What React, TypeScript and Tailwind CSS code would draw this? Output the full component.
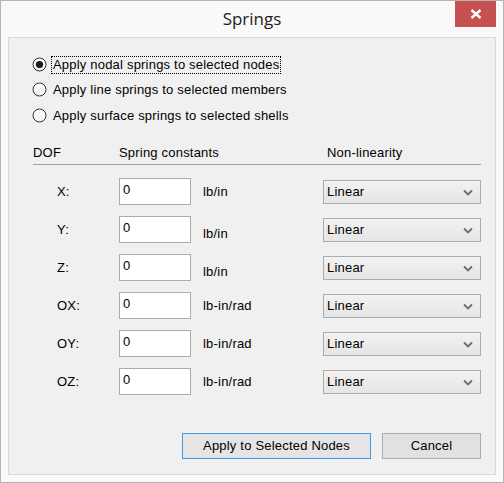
import React from "react";

const rows = [
  { dof: "X:", unit: "lb/in", shift: false },
  { dof: "Y:", unit: "lb/in", shift: true },
  { dof: "Z:", unit: "lb/in", shift: true },
  { dof: "OX:", unit: "lb-in/rad", shift: false },
  { dof: "OY:", unit: "lb-in/rad", shift: false },
  { dof: "OZ:", unit: "lb-in/rad", shift: false },
];

function Radio({ checked }: { checked?: boolean }) {
  return (
    <svg width="15" height="15" viewBox="0 0 15 15" className="shrink-0">
      <defs>
        <linearGradient id="rg" x1="0" y1="0" x2="0" y2="1">
          <stop offset="0" stopColor="#ffffff" />
          <stop offset="1" stopColor="#f0f0f0" />
        </linearGradient>
      </defs>
      <circle cx="7.5" cy="7.5" r="6.5" fill="url(#rg)" stroke="#333333" strokeWidth="1" />
      {checked && <circle cx="7.5" cy="7.5" r="3.6" fill="#1a1a1a" />}
    </svg>
  );
}

function Chevron() {
  return (
    <svg width="10" height="7" viewBox="0 0 10 7">
      <path d="M1 1.5 L5 5.5 L9 1.5" fill="none" stroke="#6d6d6d" strokeWidth="1.8" />
    </svg>
  );
}

export default function App() {
  const font = { fontFamily: '"Liberation Sans", Arial, sans-serif' };
  const radios = [
    { t: "Apply nodal springs to selected nodes", h: "h-[25px]" },
    { t: "Apply line springs to selected members", h: "h-[26px]" },
    { t: "Apply surface springs to selected shells", h: "h-[28px]" },
  ];
  return (
    <div className="w-[504px] h-[483px] border border-[#b4b4b4] bg-[#f9f9f9] flex flex-col text-[13px] text-black tracking-[0.2px]" style={font}>
      <div className="relative h-[36px] shrink-0 flex items-center justify-center">
        <span className="text-[17px] text-[#222] leading-none mt-[-1px] tracking-normal" style={{ fontFamily: '"Open Sans", "Noto Sans", sans-serif' }}>
          Springs
        </span>
        <div className="absolute right-[7px] top-0 w-[41px] h-[26px] bg-[#c75050] flex items-center justify-center">
          <svg width="12" height="10" viewBox="0 0 12 10">
            <path d="M1.5 1 L10.5 9 M10.5 1 L1.5 9" stroke="#ffffff" strokeWidth="2.4" />
          </svg>
        </div>
      </div>
      <div className="mx-[7px] h-[438px] border border-[#d9d9d9] bg-[#f0f0f0] flex flex-col">
        <div className="mt-[14px] pl-[23px] flex flex-col">
          {radios.map((r, i) => (
            <div key={r.t} className={r.h + " flex items-start"}>
              <div className="h-[25px] flex items-center">
                <Radio checked={i === 0} />
                <span className={"ml-[4px] leading-[16px] px-[1px] " + (i === 0 ? "border border-dotted border-black" : "border border-transparent")}>
                  {r.t}
                </span>
              </div>
            </div>
          ))}
        </div>
        <div className="mt-[12px] ml-[24px] w-[448px] h-[22px] border-b border-[#a0a0a0] flex items-center pb-[1px]">
          <span className="w-[86px]">DOF</span>
          <span className="w-[208px]">Spring constants</span>
          <span>Non-linearity</span>
        </div>
        <div className="mt-[13px] flex flex-col">
          {rows.map((r) => (
            <div key={r.dof} className="h-[38px] flex items-start pl-[48px]">
              <span className="w-[62px] h-[27px] flex items-center">{r.dof}</span>
              <div className="w-[72px] h-[27px] bg-white border border-[#acacac] pl-[3px] pt-[3px] leading-[15px]">0</div>
              <span className={"w-[132px] pl-[12px] h-[27px] flex items-center " + (r.shift ? "pt-[8px]" : "")}>{r.unit}</span>
              <div className="w-[158px] h-[24px] mt-[2px] border border-[#acacac] bg-gradient-to-b from-[#f2f2f2] to-[#e5e5e5] flex items-center justify-between pl-[3px] pr-[7px]">
                <span>Linear</span>
                <Chevron />
              </div>
            </div>
          ))}
        </div>
        <div className="mt-[27px] flex justify-end gap-[11px] pr-[14px]">
          <div className="w-[189px] h-[26px] border border-[#3d9ae6] bg-[#e5e5e5] flex items-center justify-center">
            Apply to Selected Nodes
          </div>
          <div className="w-[99px] h-[26px] border border-[#adadad] bg-[#e1e1e1] flex items-center justify-center">
            Cancel
          </div>
        </div>
      </div>
    </div>
  );
}
